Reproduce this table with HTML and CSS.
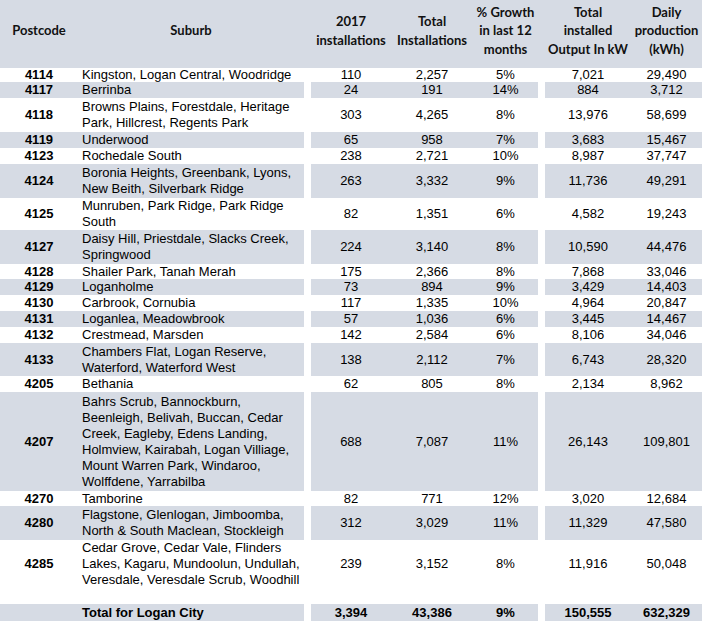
FILE: index.html
```html
<!DOCTYPE html>
<html>
<head>
<meta charset="utf-8">
<link rel="stylesheet" href="styles.css">
</head>
<body>
<table class="solar">
  <colgroup>
    <col class="c-pc"><col class="c-sub"><col class="c-gap">
    <col class="c-2017"><col class="c-tot"><col class="c-gr"><col class="c-gap">
    <col class="c-out"><col class="c-day">
  </colgroup>
  <thead>
    <tr class="head">
      <th>Postcode</th>
      <th>Suburb</th>
      <th></th>
      <th>2017<br>installations</th>
      <th>Total<br>Installations</th>
      <th>% Growth<br>in last 12<br>months</th>
      <th></th>
      <th>Total<br>installed<br>Output In kW</th>
      <th>Daily<br>production<br>(kWh)</th>
    </tr>
  </thead>
  <tbody>
    <tr class="h14"><td class="pc">4114</td><td class="sub">Kingston, Logan Central, Woodridge</td><td class="gap"></td><td>110</td><td>2,257</td><td>5%</td><td class="gap"></td><td>7,021</td><td>29,490</td></tr>
    <tr class="alt"><td class="pc">4117</td><td class="sub">Berrinba</td><td class="gap"></td><td>24</td><td>191</td><td>14%</td><td class="gap"></td><td>884</td><td>3,712</td></tr>
    <tr class="h34"><td class="pc">4118</td><td class="sub">Browns Plains, Forestdale, Heritage Park, Hillcrest, Regents Park</td><td class="gap"></td><td>303</td><td>4,265</td><td>8%</td><td class="gap"></td><td>13,976</td><td>58,699</td></tr>
    <tr class="alt"><td class="pc">4119</td><td class="sub">Underwood</td><td class="gap"></td><td>65</td><td>958</td><td>7%</td><td class="gap"></td><td>3,683</td><td>15,467</td></tr>
    <tr><td class="pc">4123</td><td class="sub">Rochedale South</td><td class="gap"></td><td>238</td><td>2,721</td><td>10%</td><td class="gap"></td><td>8,987</td><td>37,747</td></tr>
    <tr class="alt h34"><td class="pc">4124</td><td class="sub">Boronia Heights, Greenbank, Lyons, New Beith, Silverbark Ridge</td><td class="gap"></td><td>263</td><td>3,332</td><td>9%</td><td class="gap"></td><td>11,736</td><td>49,291</td></tr>
    <tr class="h32"><td class="pc">4125</td><td class="sub">Munruben, Park Ridge, Park Ridge South</td><td class="gap"></td><td>82</td><td>1,351</td><td>6%</td><td class="gap"></td><td>4,582</td><td>19,243</td></tr>
    <tr class="alt h34"><td class="pc">4127</td><td class="sub">Daisy Hill, Priestdale, Slacks Creek, Springwood</td><td class="gap"></td><td>224</td><td>3,140</td><td>8%</td><td class="gap"></td><td>10,590</td><td>44,476</td></tr>
    <tr class="h15"><td class="pc">4128</td><td class="sub">Shailer Park, Tanah Merah</td><td class="gap"></td><td>175</td><td>2,366</td><td>8%</td><td class="gap"></td><td>7,868</td><td>33,046</td></tr>
    <tr class="alt"><td class="pc">4129</td><td class="sub">Loganholme</td><td class="gap"></td><td>73</td><td>894</td><td>9%</td><td class="gap"></td><td>3,429</td><td>14,403</td></tr>
    <tr><td class="pc">4130</td><td class="sub">Carbrook, Cornubia</td><td class="gap"></td><td>117</td><td>1,335</td><td>10%</td><td class="gap"></td><td>4,964</td><td>20,847</td></tr>
    <tr class="alt"><td class="pc">4131</td><td class="sub">Loganlea, Meadowbrook</td><td class="gap"></td><td>57</td><td>1,036</td><td>6%</td><td class="gap"></td><td>3,445</td><td>14,467</td></tr>
    <tr><td class="pc">4132</td><td class="sub">Crestmead, Marsden</td><td class="gap"></td><td>142</td><td>2,584</td><td>6%</td><td class="gap"></td><td>8,106</td><td>34,046</td></tr>
    <tr class="alt h33"><td class="pc">4133</td><td class="sub">Chambers Flat, Logan Reserve, Waterford, Waterford West</td><td class="gap"></td><td>138</td><td>2,112</td><td>7%</td><td class="gap"></td><td>6,743</td><td>28,320</td></tr>
    <tr><td class="pc">4205</td><td class="sub">Bethania</td><td class="gap"></td><td>62</td><td>805</td><td>8%</td><td class="gap"></td><td>2,134</td><td>8,962</td></tr>
    <tr class="alt h99"><td class="pc">4207</td><td class="sub">Bahrs Scrub, Bannockburn, Beenleigh, Belivah, Buccan, Cedar Creek, Eagleby, Edens Landing, Holmview, Kairabah, Logan Villiage, Mount Warren Park, Windaroo, Wolffdene, Yarrabilba</td><td class="gap"></td><td>688</td><td>7,087</td><td>11%</td><td class="gap"></td><td>26,143</td><td>109,801</td></tr>
    <tr class="h15"><td class="pc">4270</td><td class="sub">Tamborine</td><td class="gap"></td><td>82</td><td>771</td><td>12%</td><td class="gap"></td><td>3,020</td><td>12,684</td></tr>
    <tr class="alt h34"><td class="pc">4280</td><td class="sub">Flagstone, Glenlogan, Jimboomba, North &amp; South Maclean, Stockleigh</td><td class="gap"></td><td>312</td><td>3,029</td><td>11%</td><td class="gap"></td><td>11,329</td><td>47,580</td></tr>
    <tr class="h48"><td class="pc">4285</td><td class="sub">Cedar Grove, Cedar Vale, Flinders Lakes, Kagaru, Mundoolun, Undullah, Veresdale, Veresdale Scrub, Woodhill</td><td class="gap"></td><td>239</td><td>3,152</td><td>8%</td><td class="gap"></td><td>11,916</td><td>50,048</td></tr>
    <tr class="spacer"><td></td><td></td><td class="gap"></td><td></td><td></td><td></td><td class="gap"></td><td></td><td></td></tr>
    <tr class="alt total"><td class="pc"></td><td class="sub">Total for Logan City</td><td class="gap"></td><td>3,394</td><td>43,386</td><td>9%</td><td class="gap"></td><td>150,555</td><td>632,329</td></tr>
  </tbody>
</table>
</body>
</html>
```

FILE: styles.css
```css
html, body {
  margin: 0;
  padding: 0;
  background: #ffffff;
}

.solar {
  width: 702px;
  table-layout: fixed;
  border-collapse: collapse;
  border-spacing: 0;
  font-family: "Liberation Sans", Arial, sans-serif;
  font-size: 13px;
  color: #000;
}

.c-pc { width: 78px; }
.c-sub { width: 226px; }
.c-gap { width: 7px; }
.c-2017 { width: 80px; }
.c-tot { width: 82px; }
.c-gr { width: 65px; }
.c-out { width: 86px; }
.c-day { width: 71px; }

.solar th,
.solar td {
  padding: 0;
  text-align: center;
  vertical-align: middle;
  white-space: nowrap;
}

.head th {
  height: 61px;
  padding-bottom: 7px;
  background: #d6dbe4;
  font-family: Lato, "Open Sans", sans-serif;
  font-weight: 700;
  font-size: 13px;
  line-height: 18.5px;
  color: #111;
}

.solar tbody td {
  height: 16px;
  line-height: 16px;
}

.solar td.sub {
  text-align: left;
  padding-left: 4px;
  white-space: normal;
}

.solar td.pc {
  font-weight: 700;
}

.alt td {
  background: #d6dbe4;
}

.alt td.gap,
.solar td.gap {
  background: #ffffff;
}

.solar tr.h14 td { height: 14px; line-height: 14px; }
.solar tr.h15 td { height: 15px; line-height: 15px; }
.solar tr.h32 td { height: 32px; }
.solar tr.h33 td { height: 33px; }
.solar tr.h34 td { height: 34px; }
.solar tr.h48 td { height: 48px; }
.solar tr.h99 td { height: 99px; }
.solar tr.spacer td { height: 16px; }
.solar tr.total td { height: 17px; font-weight: 700; }
```
